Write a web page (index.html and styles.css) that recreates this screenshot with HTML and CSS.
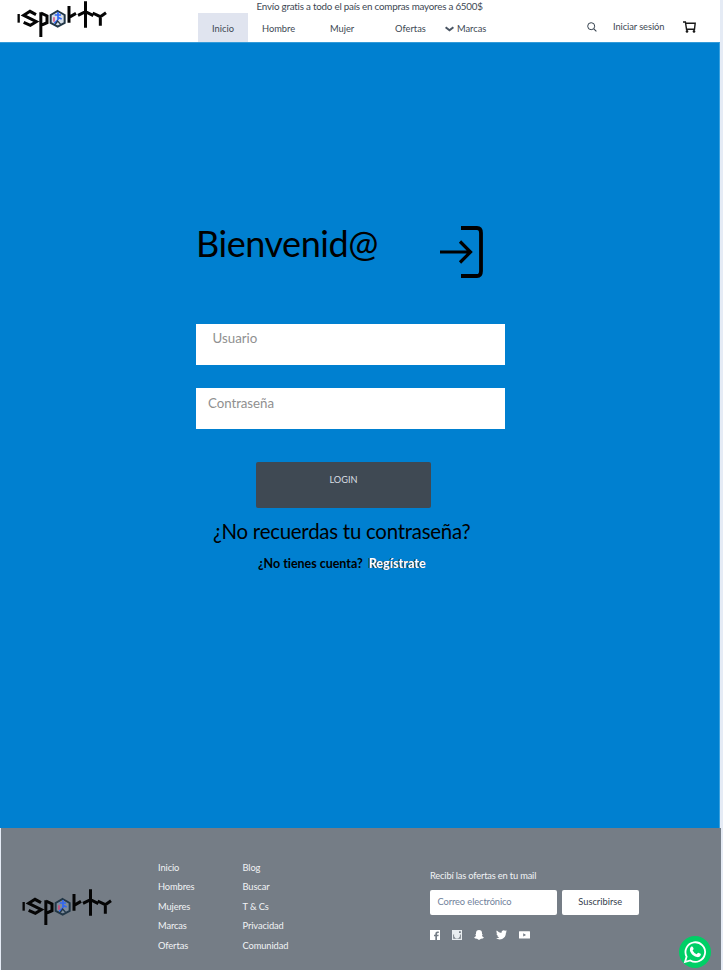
FILE: index.html
```html
<!DOCTYPE html>
<html lang="es">
<head>
<meta charset="utf-8">
<title>Sporty</title>
<link rel="stylesheet" href="styles.css">
</head>
<body>
<svg class="defs" aria-hidden="true">
  <symbol id="logo" viewBox="0 0 270 108">
    <g fill="none" stroke="#050505" stroke-width="9">
      <path d="M5 39V65" stroke-width="7"/>
      <path d="M57 41L39 31L20 43L58 62L40 73L20 64M71.5 34V108M72 36L90 45V65L72 73M156 15V65M156 49L177 37M205.5 1V80M183 43L205.5 32L229 44M227 36L250 47L267 35M250 47V74"/>
    </g>
    <path d="M122 30L143 42V66L122 77L101 66V42Z" fill="#8ba6c2" fill-opacity=".35" stroke="#223747" stroke-width="6"/>
    <path d="M111 49V62" stroke="#df3d70" stroke-width="4"/>
    <path d="M123 33V57M113 42H132M122 49L134 54M122 57L112 67" fill="none" stroke="#3168f4" stroke-width="5"/>
    <path d="M114 71L122 60L131 70" fill="none" stroke="#223747" stroke-width="4"/>
  </symbol>
</svg>
<header class="header">
  <svg class="logo"><use href="#logo"/></svg>
  <div class="center">
    <p class="promo">Envío gratis a todo el país en compras mayores a 6500$</p>
    <nav class="nav">
      <a class="active">Inicio</a><a class="n-hombre">Hombre</a><a class="n-mujer">Mujer</a><a class="n-ofertas">Ofertas</a>
      <svg class="chevron" viewBox="0 0 9 6"><path d="M.6 1.2L4.5 4.3L8.4 1.2" fill="none" stroke="#4a5563" stroke-width="2"/></svg><a class="n-marcas">Marcas</a>
    </nav>
  </div>
  <div class="actions">
    <svg class="search" viewBox="0 0 10 10"><circle cx="4.2" cy="4.2" r="3.5" fill="none" stroke="#35414e"/><path d="M6.8 6.8L9.4 9.4" stroke="#35414e" stroke-width="1.1"/></svg>
    <a class="signin">Iniciar sesión</a>
    <svg class="cart" viewBox="0 0 13 12"><path d="M0 1H2.4L3.5 8.2H11.5L12.2 2.2H2.7" fill="none" stroke="#191919" stroke-width="1.4"/><circle cx="4" cy="10.4" r="1.3" fill="#191919"/><circle cx="11" cy="10.4" r="1.3" fill="#191919"/></svg>
  </div>
</header>
<main class="main">
  <div class="welcome">
    <h1>Bienvenid@</h1>
    <svg class="enter" viewBox="0 0 44 52"><path d="M22 2H38Q42 2 42 7V45Q42 50 38 50H22" fill="none" stroke="#000" stroke-width="3.8"/><path d="M1 26H31M21 15.5L31.5 26L21 36.5" fill="none" stroke="#000" stroke-width="3.2"/></svg>
  </div>
  <div class="field user">Usuario</div>
  <div class="field pass">Contraseña</div>
  <div class="login">LOGIN</div>
  <p class="forgot">¿No recuerdas tu contraseña?</p>
  <p class="register"><span>¿No tienes cuenta?</span><a>Regístrate</a></p>
</main>
<footer class="footer">
  <svg class="logo"><use href="#logo"/></svg>
  <ul class="links first"><li>Inicio</li><li>Hombres</li><li>Mujeres</li><li>Marcas</li><li>Ofertas</li></ul>
  <ul class="links"><li>Blog</li><li>Buscar</li><li>T &amp; Cs</li><li>Privacidad</li><li>Comunidad</li></ul>
  <div class="news">
    <p>Recibí las ofertas en tu mail</p>
    <div class="form"><div class="mail">Correo electrónico</div><div class="subscribe">Suscribirse</div></div>
    <div class="social">
      <svg viewBox="0 0 10 10"><path fill="#fff" d="M0 0H10V10H7V6.3H8.4L8.7 4.8H7V4Q7 3 8 3H8.8V1.6H7.5Q5.3 1.6 5.3 3.8V4.8H4V6.3H5.3V10H0Z"/></svg>
      <svg viewBox="0 0 10 10"><path fill="#e9edf0" fill-rule="evenodd" d="M0 0H10V10H0ZM1.2 4.5V8.8H8.8V4.5H7.8A3 3 0 1 1 2.2 4.5ZM7 1.2V3H8.8V1.2Z"/><circle cx="5" cy="5.3" r="1.8" fill="#e9edf0"/></svg>
      <svg viewBox="0 0 10 10"><path fill="#fff" d="M5 0C7 0 8 1.2 8 3V4.2L9 4.5L8 5.3Q8.3 7 10 7.6L8.8 8.5L7 8.8L5 10L3 8.8L1.2 8.5L0 7.6Q1.7 7 2 5.3L1 4.5L2 4.2V3C2 1.2 3 0 5 0Z"/></svg>
      <svg class="twitter" viewBox="0 0 11 10"><path fill="#fff" d="M11 1.6L9.9 2.8C10 6.6 7.4 9.4 3.7 9.4Q1.5 9.4 0 8.3Q2 8.4 3.3 7.3Q1.7 7.1 1.2 5.7H2.2Q.5 5.1.4 3.4L1.4 3.7Q-.2 2.2.8.6Q2.8 2.9 5.5 3.1C5 1 7.5-.9 9.2.8L10.7.3L9.8 1.7Z"/></svg>
      <svg class="youtube" viewBox="0 0 11 10"><path fill="#fff" fill-rule="evenodd" d="M.5 1.2H10.5Q11 1.2 11 1.7V8Q11 8.5 10.5 8.5H.5Q0 8.5 0 8V1.7Q0 1.2.5 1.2ZM4.2 3.2V6.6L7.1 4.9Z"/></svg>
    </div>
  </div>
  <svg class="whatsapp" viewBox="0 0 32 32"><circle cx="16" cy="16" r="16" fill="#00cf66"/><path d="M6 26L7.6 20.6A9.8 9.8 0 1 1 11.3 24.5Z" fill="none" stroke="#fff" stroke-width="1.8"/><path fill="#fff" d="M12.3 10.6Q13.5 10 14 11.2L14.6 12.8Q14.7 13.4 13.6 14.6Q14.8 17 17.6 18.3L18.8 17Q19.3 16.6 19.9 16.9L21.6 17.8Q22 18.1 21.8 19Q21.2 21.4 18.3 21.1C14.7 20.6 11.4 17.3 10.9 14.2Q10.7 11.6 12.3 10.6Z"/></svg>
</footer>
</body>
</html>
```
FILE: styles.css
```css
* { box-sizing: border-box; }
body { margin: 0; width: 723px; height: 970px; overflow: hidden; background: #e5ebf5; font-family: Lato, "Liberation Sans", sans-serif; font-size: 9.3px; color: #3d4853; }
p, h1, ul { margin: 0; padding: 0; }
h1 { font-weight: 400; }
svg { display: block; flex: none; }
.defs { position: absolute; width: 0; height: 0; }
.header { display: flex; width: 720px; height: 42px; background: #fff; white-space: nowrap; }
.logo { width: 90px; height: 36px; }
.header .logo { margin: 1px 0 0 16.5px; }
.center { width: 330px; margin-left: 91.5px; }
.promo { height: 13px; line-height: 12px; padding-left: 58.5px; font-size: 9.8px; letter-spacing: -.22px; }
.nav { display: flex; height: 29px; line-height: 31px; }
.active { width: 50px; background: #e0e4ef; text-align: center; }
.n-hombre { width: 68px; margin-left: 14px; }
.n-mujer { width: 65px; }
.n-ofertas { width: 50px; }
.chevron { width: 9px; height: 6px; margin: 13px 3px 0 0; }
.actions { display: flex; margin-left: 59px; }
.search { width: 10px; height: 10px; margin-top: 21.5px; }
.signin { width: 70px; margin-left: 16px; line-height: 53px; letter-spacing: -.08px; }
.cart { width: 13px; height: 12px; margin-top: 20.5px; }
.main { width: 720px; height: 786px; padding: 182px 0 0 196px; background: #0080d0; border-right: 1px solid #38a1df; border-top: 1px solid #339bd9; color: #000; white-space: nowrap; }
.welcome { display: flex; height: 99px; }
.welcome h1 { width: 243px; font-size: 36px; line-height: 37px; letter-spacing: -.45px; }
.enter { width: 44px; height: 52px; margin-top: .5px; }
.field { width: 308.5px; height: 41px; background: #fff; color: #909090; font-size: 13.3px; line-height: 30px; }
.user { padding-left: 16.5px; height: 40.5px; line-height: 29px; }
.pass { padding-left: 12px; margin-top: 23.5px; letter-spacing: -.06px; }
.login { width: 175px; height: 45.5px; margin: 33px 0 0 60px; border-radius: 2px; background: #3f4953; color: #d9dee3; text-align: center; line-height: 35px; font-size: 9.2px; }
.forgot { margin: 9px 0 0 17px; height: 28px; line-height: 28px; font-size: 20.4px; letter-spacing: -.23px; }
.register { display: flex; margin-left: 62px; line-height: 37px; font-size: 12.5px; font-weight: 700; letter-spacing: -.03px; }
.register a { margin-left: 6px; color: #fff; text-shadow: -1px 0 #222; letter-spacing: .08px; }
.footer { position: relative; display: flex; width: 720px; height: 142px; margin-left: 1px; background: #757d86; color: #f1f3f5; white-space: nowrap; }
.footer .logo { margin: 61px 46px 0 21px; }
.links { width: 187.5px; padding-top: 30px; list-style: none; line-height: 19.4px; letter-spacing: -.1px; }
.links.first { width: 84.5px; }
.news p { margin-top: 38px; line-height: 20px; letter-spacing: -.17px; }
.form { display: flex; gap: 5px; margin-top: 4px; line-height: 24px; }
.mail { width: 126.5px; height: 25px; padding-left: 7.5px; border-radius: 2px; background: #fff; color: #71829b; letter-spacing: -.1px; }
.subscribe { width: 77.5px; height: 25px; border-radius: 2px; background: #fff; color: #35404c; text-align: center; }
.social { display: flex; gap: 12px; margin-top: 15px; }
.social svg { width: 10px; height: 10px; }
.social .twitter { width: 11px; }
.social .youtube { width: 11px; }
.whatsapp { position: absolute; left: 677.5px; top: 108px; width: 32px; height: 32px; }
```
